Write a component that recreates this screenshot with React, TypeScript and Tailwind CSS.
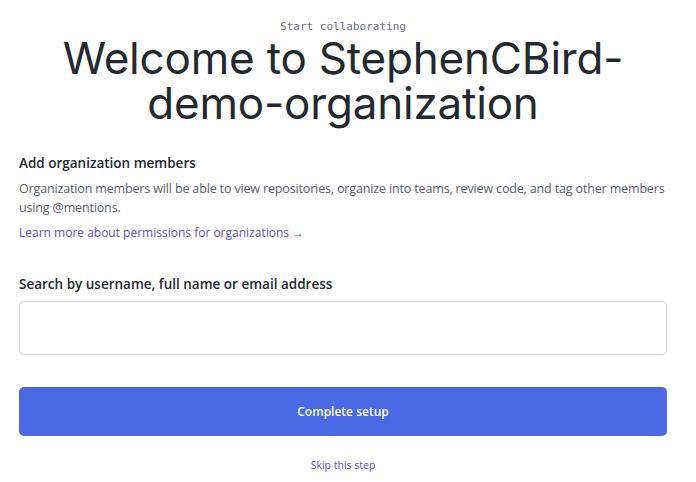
import React from "react";

export default function App() {
  return (
    <div className="w-[696px] h-[482px] bg-white overflow-hidden" style={{ fontFamily: '"Open Sans", "Noto Sans", sans-serif' }}>
      <div className="pl-[19px] pr-[29px]">
        <div className="pt-[19px] text-center font-['DejaVu_Sans_Mono',monospace] text-[11px] leading-[16px] text-[#6a737d]">
          Start collaborating
        </div>
        <h1 className="text-center font-['Inter',sans-serif] text-[44px] leading-[45px] text-[#24292f] font-normal tracking-[-0.2px] mt-[1px]">
          Welcome to StephenCBird-
          <br />
          demo-organization
        </h1>
        <div className="mt-[27px]">
          <div className="text-[13.5px] font-semibold text-[#24292f] leading-[20px]">Add organization members</div>
          <p className="mt-[6px] text-[12.5px] tracking-[-0.15px] leading-[19px] text-[#57606a]">
            Organization members will be able to view repositories, organize into teams, review code, and tag other members using @mentions.
          </p>
          <a className="block mt-[7px] text-[12px] leading-[18px] text-[#5b4fd6]">Learn more about permissions for organizations →</a>
        </div>
        <div className="mt-[32px]">
          <label className="block text-[13.5px] font-semibold text-[#24292f] leading-[20px]">Search by username, full name or email address</label>
          <input className="mt-[7px] block w-full h-[54px] border border-[#d0d7de] rounded-[5px] outline-none px-3" />
        </div>
        <button className="mt-[32px] w-full h-[49px] rounded-[5px] bg-[#4a69e2] text-white text-[12px] font-semibold">
          Complete setup
        </button>
        <div className="mt-[21px] text-center text-[10.5px] leading-[16px] text-[#5b4fd6]">Skip this step</div>
      </div>
    </div>
  );
}
